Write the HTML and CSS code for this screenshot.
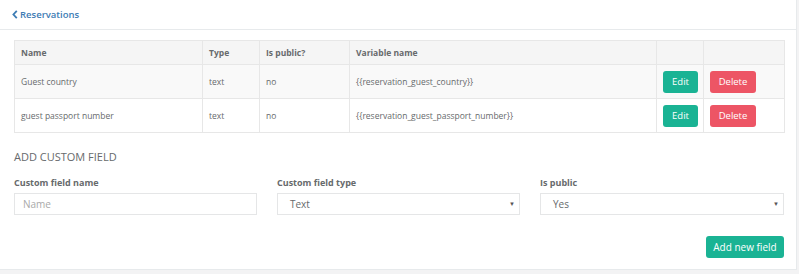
FILE: index.html
```html
<!DOCTYPE html>
<html>
<head>
<meta charset="utf-8">
<link rel="stylesheet" href="styles.css">
</head>
<body>
<div class="panel">
  <div class="panel-head">
    <a class="back" href="#"><svg class="chev" width="6" height="9" viewBox="0 0 6 9"><path d="M4.8 0.8 L1.4 4.5 L4.8 8.2" fill="none" stroke="#3d7cb4" stroke-width="1.8"/></svg>Reservations</a>
  </div>
  <div class="panel-body">
    <table class="tbl">
      <colgroup>
        <col style="width:188px"><col style="width:57px"><col style="width:90px"><col style="width:307px"><col style="width:47px"><col style="width:81px">
      </colgroup>
      <thead>
        <tr><th>Name</th><th>Type</th><th>Is public?</th><th>Variable name</th><th></th><th></th></tr>
      </thead>
      <tbody>
        <tr class="odd"><td>Guest country</td><td>text</td><td>no</td><td>{{reservation_guest_country}}</td><td><span class="btn green">Edit</span></td><td><span class="btn red">Delete</span></td></tr>
        <tr><td>guest passport number</td><td>text</td><td>no</td><td>{{reservation_guest_passport_number}}</td><td><span class="btn green">Edit</span></td><td><span class="btn red">Delete</span></td></tr>
      </tbody>
    </table>
    <h3 class="section">ADD CUSTOM FIELD</h3>
    <div class="form-row">
      <div class="field">
        <label>Custom field name</label>
        <div class="control placeholder">Name</div>
      </div>
      <div class="field">
        <label>Custom field type</label>
        <div class="control select"><span>Text</span><span class="arrow">▼</span></div>
      </div>
      <div class="field">
        <label>Is public</label>
        <div class="control select"><span>Yes</span><span class="arrow">▼</span></div>
      </div>
    </div>
    <div class="actions"><span class="btn green big">Add new field</span></div>
  </div>
</div>
</body>
</html>
```
FILE: styles.css
```css
html, body {
  margin: 0;
  padding: 0;
}
body {
  background: #f3f3f4;
  font-family: "Open Sans", "Liberation Sans", sans-serif;
  color: #676a6c;
  width: 799px;
  height: 274px;
  overflow: hidden;
}
.panel {
  width: 797px;
  box-sizing: border-box;
  height: 270px;
  background: #fff;
  border-right: 1px solid #e7eaec;
  border-bottom: 1px solid #e7eaec;
}
.panel-head {
  height: 30px;
  box-sizing: border-box;
  border-bottom: 1px solid #e7eaec;
  display: flex;
  align-items: center;
  padding-left: 12px;
}
.back {
  color: #3d7cb4;
  text-decoration: none;
  font-size: 9.5px;
  font-weight: 600;
  display: flex;
  align-items: center;
  gap: 2px;
}
.panel-body {
  padding: 10px 12px 0 14px;
}
.tbl {
  width: 770px;
  border-collapse: collapse;
  table-layout: fixed;
  font-size: 8.5px;
}
.tbl th, .tbl td {
  border: 1px solid #e7e7e7;
  text-align: left;
  padding: 0 6px;
}
.tbl th {
  height: 23px;
  background: #f5f5f5;
  font-weight: 700;
  color: #676a6c;
}
.tbl td {
  height: 33px;
}
.tbl tr.odd td {
  background: #f9f9f9;
}
.btn {
  display: inline-flex;
  align-items: center;
  justify-content: center;
  height: 22px;
  padding: 0 8px;
  border-radius: 3px;
  color: #fff;
  font-size: 9.5px;
  box-sizing: border-box;
}
.green { background: #1ab394; }
.tbl .green { width: 35px; padding: 0; }
.tbl .red { width: 46px; padding: 0; }
.red { background: #ed5565; }
.section {
  margin: 16px 0 0;
  font-size: 11px;
  font-weight: 400;
  line-height: 15px;
}
.form-row {
  display: grid;
  grid-template-columns: 243px 243px 244px;
  column-gap: 20px;
  margin-top: 13px;
}
.field label {
  display: block;
  font-size: 9px;
  font-weight: 700;
  line-height: 12px;
  margin-bottom: 4px;
}
.control {
  height: 22px;
  box-sizing: border-box;
  border: 1px solid #e5e6e7;
  font-size: 10px;
  display: flex;
  align-items: center;
  padding: 0 8px;
}
.placeholder { color: #a9a9a9; }
.select {
  justify-content: space-between;
  padding: 0 4px 0 12px;
  color: #676a6c;
}
.arrow {
  font-size: 6px;
  color: #555;
}
.actions {
  display: flex;
  justify-content: flex-end;
  margin-top: 21px;
}
.big {
  width: 78px;
  font-size: 10px;
  padding: 0;
}
```
